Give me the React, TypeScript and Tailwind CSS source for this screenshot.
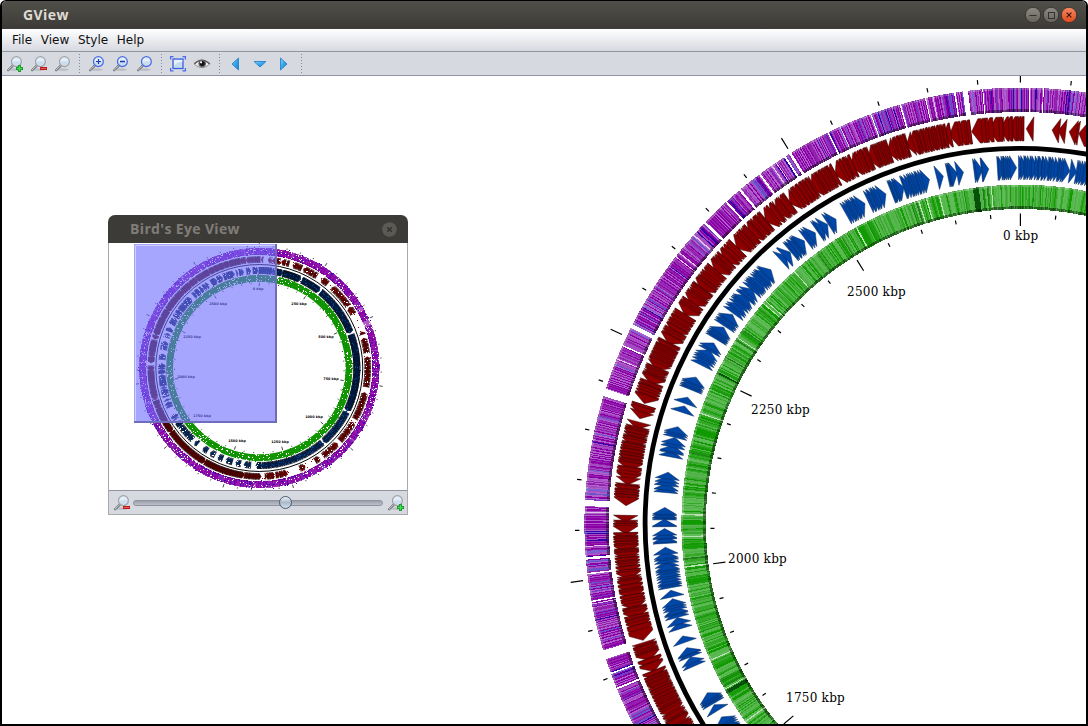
import React from "react";

type Span = [number, number, number];

const TAU = Math.PI / 180;
const STEP = 32.82;

function makeRandom(seed: number) {
  let s = seed * 7919;
  return () => {
    s = (s + 0x6d2b79f5) | 0;
    let t = Math.imul(s ^ (s >>> 15), 1 | s);
    t = (t + Math.imul(t ^ (t >>> 7), 61 | t)) ^ t;
    return ((t ^ (t >>> 14)) >>> 0) / 4294967296;
  };
}

// Angles are degrees counter-clockwise from the top of the map.
function pt(r: number, a: number) {
  return `${(-r * Math.sin(a * TAU)).toFixed(2)} ${(-r * Math.cos(a * TAU)).toFixed(2)}`;
}

function band(r0: number, r1: number, a0: number, a1: number) {
  return `M${pt(r0, a0)}L${pt(r1, a0)}L${pt(r1, a1)}L${pt(r0, a1)}Z`;
}

// Reverse strand features: [start, tip, number of features]
const RED: Span[] = [
  [-1.9, -0.85, 1], [-5.7, -4.6, 1], [-6.6, -5.5, 1], [-8.5, -7.1, 2], [-11, -8.5, 4], [-14, -11.8, 4],
  [-0.5, 3, 8], [2.4, 7.1, 8], [7.2, 10.4, 6], [10.1, 16.8, 22], [16.5, 19.7, 9], [19.3, 22.7, 11],
  [22.2, 25.4, 8], [24.9, 28, 8], [27.8, 32, 13], [31.4, 35.8, 12], [35.6, 38.2, 6], [37.6, 40.2, 6], [39.9, 45.9, 19],
  [45.7, 48.6, 7], [48, 50.6, 7], [50.2, 54, 11], [53.4, 56.5, 9], [56, 58.2, 5], [58, 63, 15], [62.7, 67.2, 15],
  [66.7, 69.4, 8], [69, 72.3, 10], [72.5, 74.6, 4], [75, 76.2, 1], [75.8, 82.3, 25], [81.7, 84.4, 5], [84.2, 87.4, 9],
  [88.8, 89.8, 1], [89.5, 91.5, 5], [91.3, 98.2, 24], [97.6, 105.6, 23], [104.8, 107.2, 3], [107.5, 110.3, 8],
  [109.9, 112, 4], [111.8, 119, 24], [118.3, 126, 22],
];
const RED_FAR: Span[] = [
  [126, 150, 70], [150, 172, 70], [172, 181, 20], [183, 195, 15], [202, 205, 4], [211, 214, 5], [216, 226, 14],
  [228, 240, 20], [242, 257, 25], [260, 276, 30], [278, 286, 14], [288, 289.5, 2], [300, 304, 5], [305, 318, 24],
  [321, 325, 6], [328, 336, 13], [337, 342, 7], [344, 346, 3],
];

// Forward strand features
const BLUE: Span[] = [
  [3.7, 0.6, 8], [0.3, -8, 21], [-7.9, -9.1, 1], [-9, -14, 13], [7.5, 6.1, 2], [6.3, 5.1, 2], [11.8, 10.2, 4],
  [10.5, 9.2, 1], [13.8, 12.5, 1], [19.2, 15.6, 9], [16.3, 14.8, 2], [21.3, 19.1, 6], [25.3, 22.2, 7],
  [29.4, 25.9, 8], [32.7, 31.2, 2], [34.8, 32.8, 3], [37.1, 35.2, 3], [40.2, 37.4, 7], [42.3, 40.3, 2],
  [49, 44.5, 11], [53.8, 48.8, 10], [56.3, 54, 5], [58.8, 56.5, 6], [61, 59.5, 2], [63.6, 60.8, 5],
  [67.9, 65.7, 5], [70.5, 69.2, 1], [72, 70.7, 1], [76, 74.2, 3], [79.2, 76, 5], [85, 81.7, 5],
  [89.4, 87.4, 5], [90.5, 89.3, 2], [93.2, 90.8, 5], [97, 93.8, 5], [100.4, 96.4, 9], [102, 100.8, 1],
  [105.3, 102.2, 6], [107.2, 105.3, 2], [109.6, 108.4, 1], [112, 110.4, 3], [113.6, 112, 2],
  [120.4, 118.4, 5], [121.8, 120.6, 1], [126, 122.9, 7],
];
const BLUE_FAR: Span[] = [
  [137, 126, 18], [141, 139, 3], [148, 145, 4], [153, 150, 4], [158, 155, 4], [164, 160, 6], [169, 166, 4],
  [175, 171, 6], [181, 178, 7], [220, 181, 85], [243, 221, 55], [290, 244, 160], [321, 291, 100], [334, 322, 40], [346, 335, 40],
];

const PURPLE_GAPS: [number, number][] = [
  [6.9, 7.6], [8.55, 8.75], [4.9, 5.02], [-1.3, -1.2], [-3.1, -3], [12.5, 12.64], [15.9, 16.1], [20, 20.14], [26.1, 26.3],
  [31.7, 32.05], [32.55, 32.8], [36.6, 36.85], [39.9, 40.2], [42.3, 42.55], [46.2, 46.55], [62.8, 63.3],
  [65.8, 66], [72, 73], [86.9, 87.7], [94.4, 94.75], [96.5, 96.7], [100.2, 100.4], [106.9, 108.1],
  [110, 110.2], [112.1, 112.35], [124.5, 125], [291, 294], [299, 301],
];

const PURPLES = ["#8b00a6", "#8b00a6", "#8b00a6", "#9420ae", "#a64cc2", "#b060cb", "#b060cb", "#9830b8"];
const BLUES = ["#3300aa", "#6a54cc", "#7a62d2", "#7a3cc4"];
const GREENS = ["#129a02", "#1c9e10", "#32a826", "#56b84c", "#56b84c", "#60bc58", "#4fb045", "#3ca832"];

function Arrows({ spans, r0, r1, fill, line, seed, width, pack }: {
  spans: Span[]; r0: number; r1: number; fill: string; line: string; seed: number; width: number; pack: number;
}) {
  const rnd = makeRandom(seed);
  const mid = (r0 + r1) / 2;
  const out: string[] = [];
  spans.forEach(([base, tip, n]) => {
    const dir = tip > base ? 1 : -1;
    const total = Math.abs(tip - base);
    const head = Math.min(total, 1.1);
    const step = n > 1 ? (total - head) / (n - 1) : 0;
    for (let i = 0; i < n; i++) {
      const jitter = i > 0 && i < n - 1 ? (rnd() - 0.5) * step * 0.9 : 0;
      const t = tip - dir * (step * (n - 1 - i) + jitter);
      const reach = Math.abs(t - base);
      const body = rnd() < 0.75 ? head * pack : 0;
      const len = Math.min(Math.max(head, step + body + head * 0.3), Math.max(reach, head));
      const b = t - dir * len;
      const h = t - dir * head;
      out.push(`M${pt(r0, b)}L${pt(r0, h)}L${pt(mid, t)}L${pt(r1, h)}L${pt(r1, b)}Z`);
    }
  });
  return (
    <g fill={fill} stroke={line} strokeWidth={width} strokeLinejoin="round">
      {out.map((d, i) => <path key={i} d={d} />)}
    </g>
  );
}

function Stripes({ kind, from, to, r0, r1, seed, min }: {
  kind: "purple" | "green"; from: number; to: number; r0: number; r1: number; seed: number; min: number;
}) {
  const rnd = makeRandom(seed);
  const items: React.ReactNode[] = [];
  let a = from;
  let tone = 0;
  let left = 0;
  while (a < to) {
    if (left <= 0) {
      tone = rnd();
      left = 0.5 + rnd() * 1.8;
    }
    let w = min * (0.85 + rnd() * rnd() * 1);
    let over = 0.05;
    if (kind === "purple") {
      const gap = PURPLE_GAPS.find(([g0, g1]) => a + w + over > g0 && a < g1);
      if (gap) {
        if (a >= gap[0] - 0.01) {
          a = gap[1];
          continue;
        }
        w = gap[0] - a;
        over = 0;
      }
    }
    let color: string;
    if (kind === "purple") {
      const even = items.length % 2 === 0;
      color = rnd() < (tone > 0.78 ? 0.4 : 0.09)
        ? BLUES[Math.floor(rnd() * 4)]
        : PURPLES[(even ? 0 : 3) + Math.floor(rnd() * (tone < 0.3 ? 4 : 5))];
      if (rnd() < 0.012) color = "#dfc4ec";
    } else {
      color = tone > 0.9 ? GREENS[Math.floor(rnd() * 4)] : GREENS[Math.floor(rnd() * 8)];
      if (rnd() < 0.03) color = "#b8e2b2";
      if (rnd() < 0.02) color = "#267a20";
      if ((a > 7 && a < 7.9) || (a > 63.3 && a < 63.6) || (a > 119.5 && a < 120.1)) color = "#07520a";
      if (a > 73.5 && a < 74.4) color = "#0f9a00";
    }
    const shade = rnd() < 0.7 ? 0.46 : 0.2;
    items.push(
      <g key={a}>
        <path d={band(r0, r1, a, a + w + over)} fill={color} />
        <path d={band(r0, r0 + 2.8, a, a + w)} fill="#000" fillOpacity={shade} />
        <path d={band(r1 - 2, r1, a, a + w)} fill={rnd() < 0.5 ? "#999" : "#fff"} fillOpacity={0.25} />
      </g>,
    );
    left -= w;
    a += w;
  }
  return <g shapeRendering="crispEdges">{items}</g>;
}

function Ticks({ full }: { full?: boolean }) {
  const items: React.ReactNode[] = [];
  for (let k = 0; k < 55; k++) {
    const a = 360 - (k * STEP) / 5;
    if (!full && a > 135 && a < 345) continue;
    const major = k % 5 === 0;
    items.push(
      <path key={k} d={`M${pt(441, a)}L${pt(major ? 453.5 : 445.5, a)}M${pt(310, a)}L${pt(major ? 297.5 : 306, a)}`} />,
    );
  }
  return <g stroke="#000" strokeWidth={full ? 2.6 : 1.2}>{items}</g>;
}

const LABELS: [string, number, number][] = [
  ["0 kbp", 1003, 240], ["2500 kbp", 847, 296], ["2250 kbp", 751, 414], ["2000 kbp", 728, 563], ["1750 kbp", 786, 702],
];

function GenomeMap() {
  return (
    <svg width="1084" height="648" viewBox="2 76 1084 648" className="block">
      <g transform="translate(1020.4 523.6)">
        <Stripes kind="purple" from={-12} to={130} r0={411.5} r1={436} seed={41} min={0.14} />
        <Arrows spans={RED} r0={382.6} r1={407} fill="#8e0000" line="#350508" seed={7} width={0.5} pack={0.6} />
        <circle r="375.3" fill="none" stroke="#000" strokeWidth="4.8" />
        <Arrows spans={BLUE} r0={343.8} r1={368} fill="#0047a8" line="#092a5c" seed={9} width={0.5} pack={0.25} />
        <Stripes kind="green" from={-15} to={135} r0={314.5} r1={339} seed={77} min={0.18} />
        <Ticks />
      </g>
      <g fontFamily="'DejaVu Serif', serif" fontSize="12" letterSpacing="0.25" fill="#000">
        {LABELS.map(([t, x, y]) => <text key={t} x={x} y={y}>{t}</text>)}
      </g>
    </svg>
  );
}

const MINI_LABELS: [string, number, number][] = [
  ["0 kbp", 258, 290], ["250 kbp", 299, 305], ["500 kbp", 326, 338], ["750 kbp", 331, 380], ["1000 kbp", 314, 418],
  ["1250 kbp", 280, 443], ["1500 kbp", 237, 442], ["1750 kbp", 202, 417], ["2000 kbp", 186, 378],
  ["2250 kbp", 192, 338], ["2500 kbp", 218, 305],
];

function Specks() {
  const rnd = makeRandom(301);
  const items: React.ReactNode[] = [];
  for (let i = 0; i < 2300; i++) {
    const a = rnd() * 360 * TAU;
    const pick = rnd();
    const outer = pick < 0.4;
    const gene = pick > 0.72;
    const red = pick > 0.86;
    const r = outer ? 113 + rnd() * 8 : gene ? (red ? 105.5 : 95) + rnd() * 6 : 86 + rnd() * 7.6;
    const x = Math.round(259.3 - r * Math.sin(a) - 0.5);
    const y = Math.round(368 - r * Math.cos(a) - 0.5);
    let fill = rnd() < 0.6 ? "#fff" : outer ? "#2c00b4" : "#0a8500";
    if (gene) {
      const left = Math.sin(a) > 0;
      fill = red ? (left ? "#5a0000" : rnd() < 0.5 ? "#fff" : "#b00000") : left ? "#fff" : "#06408f";
    }
    items.push(<rect key={i} x={x} y={y} width="1" height="1" fill={fill} />);
  }
  return <g shapeRendering="crispEdges">{items}</g>;
}

function Overview() {
  return (
    <svg width="298" height="247" viewBox="109 243 298 247" className="block">
      <g transform="translate(259.3 368) scale(0.2752)">
        <Stripes kind="purple" from={0} to={360} r0={411} r1={437} seed={5} min={0.6} />
        <circle r="423.5" fill="none" stroke="#8b00a6" strokeWidth="25" strokeOpacity="0.65" strokeDasharray="180 4 90 6 140 4" />
        <Arrows spans={[...RED, ...RED_FAR]} r0={382} r1={406} fill="#740000" line="#180000" seed={3} width={1.4} pack={0.3} />
        <circle r="376" fill="none" stroke="#000" strokeWidth="3.6" />
        <Arrows spans={[...BLUE, ...BLUE_FAR]} r0={342} r1={367} fill="#063a85" line="#000610" seed={4} width={1.8} pack={0.2} />
        <circle r="326" fill="none" stroke="#119500" strokeWidth="25" />
        <Ticks full />
      </g>
      <Specks />
      <g fontFamily="'DejaVu Sans', sans-serif" fontSize="3.4" fontWeight="bold" textAnchor="middle">
        {MINI_LABELS.map(([t, x, y]) => <text key={t} x={x} y={y}>{t}</text>)}
      </g>
      <rect x="134" y="244" width="143" height="179" fill="#6e6eff" fillOpacity="0.61" />
      <path d="M134.5 422V244.5H276" fill="none" stroke="#a4a4f8" />
      <path d="M135.5 421V245.5H275" fill="none" stroke="#d0d0ff" />
      <path d="M134 422H276V244" fill="none" stroke="#6d6dbb" strokeWidth="2" />
    </svg>
  );
}

function Magnifier({ blue, mark }: { blue?: boolean; mark?: "add" | "remove" | "plus" | "minus" }) {
  const rim = blue ? "#4a6ce0" : "#a0a4a9";
  return (
    <svg width="18" height="18" viewBox="0 0 18 18">
      <ellipse cx="9" cy="14.6" rx="6" ry="1.3" fill="#000" fillOpacity="0.12" />
      <path d="M2.2 15.2L6.8 10.6" stroke="#66696c" strokeWidth="2.2" strokeLinecap="round" />
      <path d="M2.3 15L6.6 10.7" stroke="#dcdede" strokeWidth="1" strokeLinecap="round" />
      <circle cx="10.4" cy="6.6" r="4.9" fill="#e2edf8" stroke={rim} strokeWidth="1.3" />
      <path d="M6.6 7.4Q9 5.6 14.2 6.6A3.9 3.9 0 0 1 6.6 7.4" fill="#bfd5ea" fillOpacity="0.7" />
      {mark === "plus" && <path d="M8 6.5H13M10.5 4V9" stroke="#1b39ae" strokeWidth="1.2" />}
      {mark === "minus" && <path d="M8 6.5H13" stroke="#1b39ae" strokeWidth="1.3" />}
      {mark === "add" && (
        <>
          <path d="M10 13.5H17M13.5 10V17" stroke="#158a22" strokeWidth="2.8" />
          <path d="M10.7 13.5H16.3M13.5 10.7V16.3" stroke="#3fe052" strokeWidth="1.3" />
        </>
      )}
      {mark === "remove" && (
        <>
          <path d="M10 13.5H17" stroke="#b8171c" strokeWidth="3" />
          <path d="M10.7 13.5H16.3" stroke="#ef5a5a" strokeWidth="1" />
        </>
      )}
    </svg>
  );
}

function FitIcon() {
  return (
    <svg width="18" height="18" viewBox="0 0 18 18">
      <rect x="4" y="4" width="10" height="9.5" fill="#c4daee" stroke="#3d61e4" strokeWidth="1.3" />
      <path d="M5 11Q8 6.5 13.3 7V5H5Z" fill="#e6f1fa" />
      <path d="M1.6 4.5V1.7H4.5M13.5 1.7H16.4V4.5M16.4 13V15.8H13.5M4.5 15.8H1.6V13" fill="none" stroke="#4a6cf0" strokeWidth="1.3" />
    </svg>
  );
}

function EyeIcon() {
  return (
    <svg width="18" height="18" viewBox="0 0 18 18">
      <path d="M1.3 9.2Q8.8 1.8 16.7 9.2Q9 16.2 1.3 9.2Z" fill="#efefef" stroke="#888" strokeWidth="0.9" />
      <path d="M1.3 8.8Q8.8 1.5 16.8 8.8" fill="none" stroke="#555" strokeWidth="1.3" />
      <circle cx="9.2" cy="8.6" r="3.8" fill="#666" />
      <circle cx="9.2" cy="8.6" r="2.5" fill="#111" />
      <circle cx="8.1" cy="7.3" r="1.1" fill="#fff" />
    </svg>
  );
}

function TriangleIcon({ d }: { d: string }) {
  return (
    <svg width="18" height="18" viewBox="0 0 18 18">
      <defs>
        <linearGradient id="tri" x1="0" y1="0" x2="1" y2="1">
          <stop offset="0" stopColor="#8fd4fa" />
          <stop offset="0.5" stopColor="#35a4ea" />
          <stop offset="1" stopColor="#1680cc" />
        </linearGradient>
      </defs>
      <path d={d} fill="url(#tri)" stroke="#2484c8" strokeWidth="0.9" strokeLinejoin="round" />
    </svg>
  );
}

function Tool({ children }: { children: React.ReactNode }) {
  return <button className="flex h-[23px] w-6 items-center justify-center">{children}</button>;
}

function Separator({ size = "w-[10px]" }: { size?: string }) {
  return (
    <div className={`flex justify-center ${size}`}>
      <div className="h-[20px] w-px bg-[repeating-linear-gradient(to_bottom,#85889a_0_1px,transparent_1px_3px)]" />
    </div>
  );
}

function WindowButton({ kind }: { kind: "min" | "max" | "close" }) {
  return (
    <svg width="18" height="18" viewBox="0 0 18 18">
      <defs>
        <linearGradient id={`wb-${kind}`} x1="0" y1="0" x2="0" y2="1">
          <stop offset="0" stopColor={kind === "close" ? "#f68a63" : "#8d8b82"} />
          <stop offset="1" stopColor={kind === "close" ? "#e2491c" : "#64625a"} />
        </linearGradient>
      </defs>
      <circle cx="9" cy="9" r="7.7" fill={`url(#wb-${kind})`} stroke="#2f2e2a" strokeWidth="0.8" />
      {kind === "min" && <path d="M5.5 9.5H12.5" stroke="#33322e" />}
      {kind === "max" && <rect x="6.5" y="6.5" width="6" height="6" fill="none" stroke="#33322e" />}
      {kind === "close" && <path d="M6.6 6.6L11.4 11.4M11.4 6.6L6.6 11.4" stroke="#3c1a10" strokeWidth="1.2" />}
    </svg>
  );
}

function BirdsEyeWindow() {
  return (
    <section className="absolute left-[108px] top-[215px] flex h-[300px] w-[300px] flex-col overflow-hidden rounded-t-[7px] bg-white">
      <header className="flex h-7 shrink-0 items-center justify-between bg-[#3c3b37] pl-[22px] pr-[11px]">
        <h2 className="font-['Open_Sans',sans-serif] text-[14px] font-bold leading-none tracking-[0.36px] text-[#807d78]">Bird's Eye View</h2>
        <svg width="15" height="15" viewBox="0 0 15 15">
          <circle cx="7.5" cy="7.5" r="7.3" fill="#5b5a55" />
          <path d="M5.2 5.2L9.8 9.8M9.8 5.2L5.2 9.8" stroke="#33322e" strokeWidth="1.5" />
        </svg>
      </header>
      <div className="flex grow flex-col border-x border-b border-[#a9a9a9]">
        <Overview />
        <div className="flex grow items-center border-t border-[#92929e] bg-[#d6d9e0] pl-1 pr-[2px]">
          <Magnifier mark="remove" />
          <div className="relative ml-[2px] mr-1 h-[6px] grow rounded-full border border-[#8e939e] bg-gradient-to-b from-[#9ba0aa] to-[#bbc0ca]">
            <div className="absolute -top-[5px] left-[145px] size-[13px] rounded-full border border-[#4c5c70] bg-gradient-to-b from-[#eef2f6] via-[#aabaca] to-[#d2e0ea]" />
          </div>
          <Magnifier mark="add" />
        </div>
      </div>
    </section>
  );
}

export default function App() {
  return (
    <div className="h-[726px] w-[1088px] overflow-hidden bg-white">
      <main className="relative flex h-full flex-col overflow-hidden rounded-t-[6px] border-x-2 border-b-2 border-t border-black bg-white">
        <header className="flex h-7 shrink-0 items-center justify-between bg-gradient-to-b from-[#504f49] to-[#3c3b37] pl-[21px] pr-[8px]">
          <h1 className="font-['Open_Sans',sans-serif] text-[14px] font-bold leading-none tracking-[0.4px] text-[#dfdbd2]">GView</h1>
          <div className="flex">
            <WindowButton kind="min" />
            <WindowButton kind="max" />
            <WindowButton kind="close" />
          </div>
        </header>
        <nav className="flex h-[23px] shrink-0 items-center gap-[8.7px] border-b border-[#9292a0] bg-gradient-to-b from-white to-[#d6d9e0] pl-[10px] font-['DejaVu_Sans',sans-serif] text-[12px] text-[#111]">
          <span>File</span>
          <span>View</span>
          <span>Style</span>
          <span>Help</span>
        </nav>
        <div className="flex h-6 shrink-0 items-center border-b border-[#9292a4] bg-[#d6d9e0] pl-px">
          <Tool><Magnifier mark="add" /></Tool>
          <Tool><Magnifier mark="remove" /></Tool>
          <Tool><Magnifier /></Tool>
          <Separator size="w-[10px] pr-[2px]" />
          <Tool><Magnifier blue mark="plus" /></Tool>
          <Tool><Magnifier blue mark="minus" /></Tool>
          <Tool><Magnifier blue /></Tool>
          <Separator size="w-[9px]" />
          <Tool><FitIcon /></Tool>
          <Tool><EyeIcon /></Tool>
          <Separator />
          <Tool><TriangleIcon d="M11.5 3V15L5 9Z" /></Tool>
          <Tool><TriangleIcon d="M3 6.5H15L9 12Z" /></Tool>
          <Tool><TriangleIcon d="M5.5 3V15L12 9Z" /></Tool>
          <Separator />
        </div>
        <GenomeMap />
        <div className="absolute -left-[2px] -top-px"><BirdsEyeWindow /></div>
      </main>
    </div>
  );
}
